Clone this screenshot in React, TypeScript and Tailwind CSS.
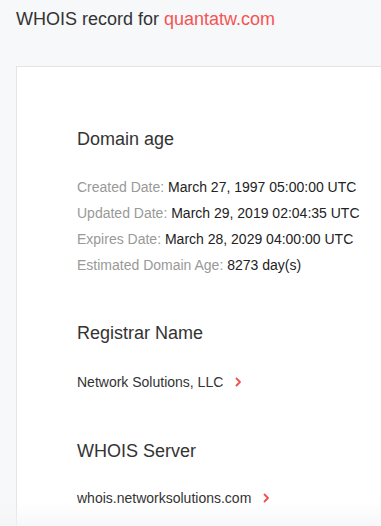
import React from "react";

const Chevron = () => (
  <svg width="7" height="10" viewBox="0 0 7 10" className="ml-[12px] shrink-0">
    <path d="M1.5 1.5 L5 5 L1.5 8.5" fill="none" stroke="#f0504f" strokeWidth="1.8" strokeLinecap="round" strokeLinejoin="round" />
  </svg>
);

const Row = ({ label, value }: { label: string; value: string }) => (
  <div className="text-[14px] leading-[26px] whitespace-nowrap">
    <span className="text-[#999999]">{label}: </span>
    <span className="text-[#222222]">{value}</span>
  </div>
);

export default function App() {
  return (
    <div className="relative h-[526px] w-[381px] overflow-hidden bg-[#f7f8fa]" style={{ fontFamily: '"Liberation Sans", Arial, Helvetica, sans-serif' }}>
      <h1 className="pl-[16px] pt-[8px] text-[18px] leading-[22px] text-[#333333] whitespace-nowrap">
        WHOIS record for <span className="text-[#f55454]">quantatw.com</span>
      </h1>
      <div className="ml-[16px] mt-[36px] h-[600px] border-l border-t border-[#e3e4e6] bg-white pl-[60px] pt-[60px]">
        <h2 className="text-[18px] leading-[24px] text-[#333333]">Domain age</h2>
        <div className="mt-[23px]">
          <Row label="Created Date" value="March 27, 1997 05:00:00 UTC" />
          <Row label="Updated Date" value="March 29, 2019 02:04:35 UTC" />
          <Row label="Expires Date" value="March 28, 2029 04:00:00 UTC" />
          <Row label="Estimated Domain Age" value="8273 day(s)" />
        </div>
        <h2 className="mt-[43px] text-[18px] leading-[24px] text-[#333333]">Registrar Name</h2>
        <div className="mt-[24px] flex items-center text-[14px] leading-[26px] text-[#333333]">
          <span>Network Solutions, LLC</span>
          <Chevron />
        </div>
        <h2 className="mt-[44px] text-[18px] leading-[24px] text-[#333333]">WHOIS Server</h2>
        <div className="mt-[22px] flex items-center text-[14px] leading-[26px] text-[#333333]">
          <span>whois.networksolutions.com</span>
          <Chevron />
        </div>
      </div>
      <div className="pointer-events-none absolute bottom-0 left-0 h-[24px] w-full bg-gradient-to-b from-transparent to-[#f3f4f6]/70" />
    </div>
  );
}
